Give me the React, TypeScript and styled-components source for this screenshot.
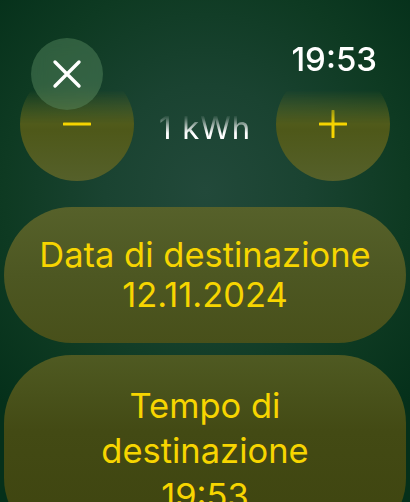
import React from "react";
import styled, { createGlobalStyle } from "styled-components";

const GlobalStyle = createGlobalStyle`
  html, body {
    margin: 0;
    padding: 0;
    background: #03220f;
  }
  * {
    box-sizing: border-box;
  }
`;

const YELLOW = "#f7d500";

const App = () => {
  return (
    <>
      <GlobalStyle />
      <Screen>
        <Content>
          <StepperRow>
            <RoundButton aria-label="meno">
              <svg width="28" height="28" viewBox="0 0 28 28">
                <path d="M1 14H27" stroke={YELLOW} strokeWidth="3" strokeLinecap="round" />
              </svg>
            </RoundButton>
            <Value>1 kWh</Value>
            <RoundButton aria-label="più">
              <svg width="28" height="28" viewBox="0 0 28 28">
                <path
                  d="M1 14H27M14 1V27"
                  stroke={YELLOW}
                  strokeWidth="3"
                  strokeLinecap="round"
                />
              </svg>
            </RoundButton>
          </StepperRow>
          <Pill $top={26} $lineHeight={40} $dark={false}>
            Data di destinazione
            <br />
            12.11.2024
          </Pill>
          <Pill $top={12} $lineHeight={45} $dark>
            Tempo di
            <br />
            destinazione
            <br />
            19:53
          </Pill>
        </Content>
        <TopBar>
          <CloseButton aria-label="chiudi">
            <svg width="30" height="30" viewBox="0 0 30 30">
              <path
                d="M3 3L27 27M27 3L3 27"
                stroke="#fff"
                strokeWidth="3.4"
                strokeLinecap="round"
              />
            </svg>
          </CloseButton>
          <Clock>19:53</Clock>
        </TopBar>
      </Screen>
    </>
  );
};

export default App;

const Screen = styled.div`
  position: relative;
  width: 410px;
  height: 502px;
  overflow: hidden;
  font-family: Inter, "Noto Sans", sans-serif;
  background: radial-gradient(
    ellipse 70% 60% at 50% 38%,
    #22493a 0%,
    #1a4331 35%,
    #0e3a22 70%,
    #05301a 100%
  );
`;

const TopBar = styled.div`
  position: absolute;
  top: 0;
  left: 0;
  right: 0;
  display: flex;
  justify-content: space-between;
  align-items: flex-start;
  padding: 38px 33px 0 31px;
`;

const CloseButton = styled.button`
  width: 72px;
  height: 72px;
  border-radius: 50%;
  border: none;
  padding: 0;
  display: flex;
  align-items: center;
  justify-content: center;
  background: rgba(120, 175, 125, 0.32);
  backdrop-filter: blur(8px);
`;

const Clock = styled.div`
  color: #fff;
  font-size: 33px;
  font-weight: 500;
  line-height: 1;
  margin-top: 5px;
`;

const Content = styled.div`
  display: flex;
  flex-direction: column;
  padding: 67px 4px 0;
  -webkit-mask-image: linear-gradient(to bottom, transparent 0, transparent 90px, #000 124px);
  mask-image: linear-gradient(to bottom, transparent 0, transparent 90px, #000 124px);
`;

const StepperRow = styled.div`
  display: flex;
  justify-content: space-between;
  align-items: center;
  padding: 0 16px;
`;

const RoundButton = styled.button`
  width: 114px;
  height: 114px;
  border-radius: 50%;
  border: none;
  padding: 0;
  display: flex;
  align-items: center;
  justify-content: center;
  background: linear-gradient(to bottom, #66722a 0%, #4e5819 55%, #55602a 100%);
`;

const Value = styled.div`
  color: #fff;
  font-size: 31px;
  font-weight: 400;
  letter-spacing: 1px;
  margin-top: 6px;
  -webkit-mask-image: linear-gradient(to bottom, transparent 15%, #000 65%);
  mask-image: linear-gradient(to bottom, transparent 15%, #000 65%);
`;

const Pill = styled.div<{ $top: number; $lineHeight: number; $dark: boolean }>`
  margin-top: ${(p) => p.$top}px;
  min-height: 136px;
  border-radius: 68px;
  padding: 28px 12px;
  display: flex;
  align-items: center;
  justify-content: center;
  text-align: center;
  color: ${YELLOW};
  font-size: 34.5px;
  font-weight: 400;
  line-height: ${(p) => p.$lineHeight}px;
  background: ${(p) =>
    p.$dark
      ? "linear-gradient(to bottom, #4f5a22 0%, #434a14 40%, #3e440f 100%)"
      : "linear-gradient(to bottom, #56612a 0%, #4d5722 50%, #48501a 100%)"};
  flex-shrink: 0;
`;
